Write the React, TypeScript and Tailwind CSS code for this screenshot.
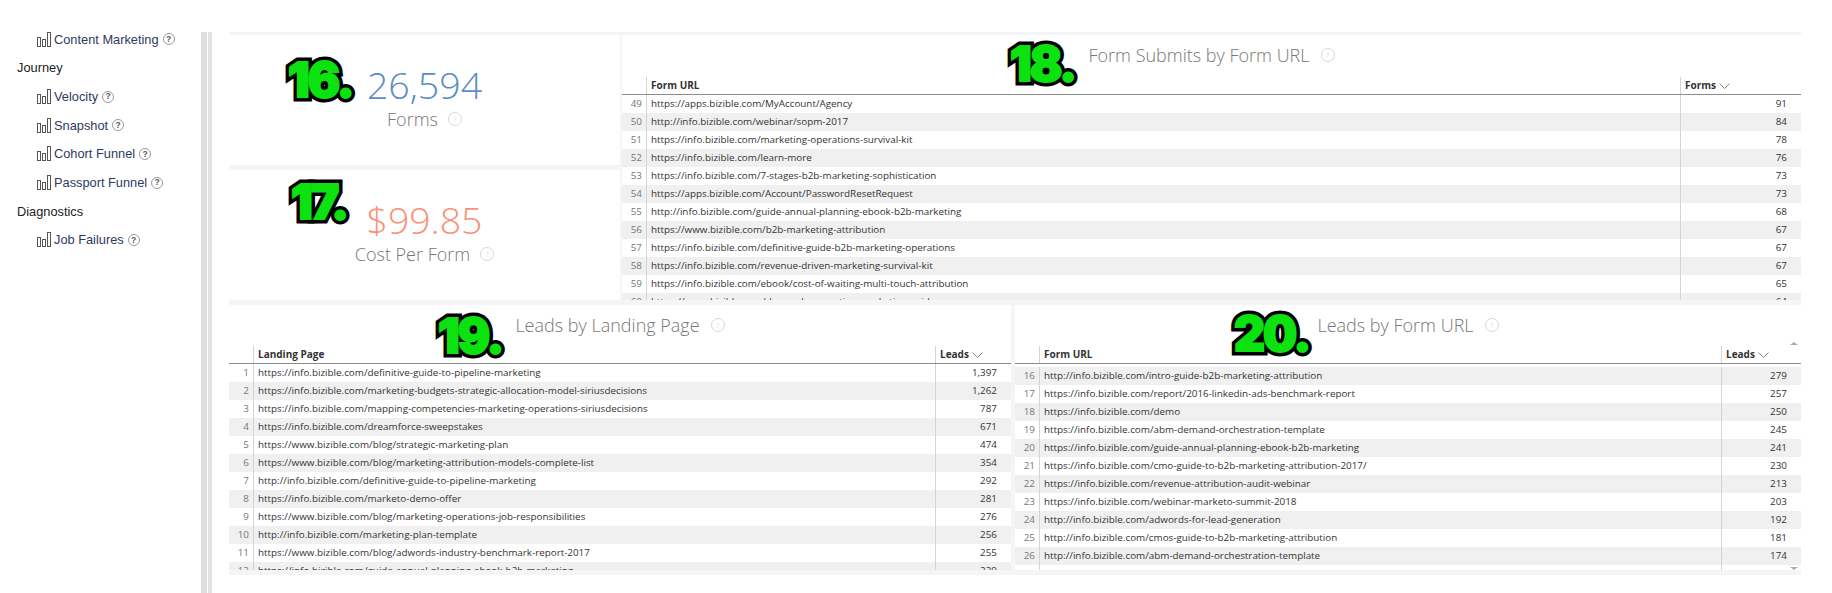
const OS = "font-['Open_Sans',sans-serif]";

function BarsIcon() {
  return (
    <svg width="14" height="15" viewBox="0 0 14 15" fill="none" stroke="#555" strokeWidth="1" className="shrink-0">
      <rect x="0.5" y="5.5" width="3" height="9" />
      <rect x="5.5" y="7.5" width="3" height="7" />
      <rect x="10.5" y="0.5" width="3" height="14" />
    </svg>
  );
}

function SmallHelp() {
  return (
    <span className="ml-[4px] inline-flex h-[12px] w-[12px] items-center justify-center rounded-full border border-[#999] text-[8.5px] font-bold leading-none text-[#555]">?</span>
  );
}

function LightHelp() {
  return (
    <span className={`inline-flex h-[14px] w-[14px] items-center justify-center rounded-full border border-[#d8d8d8] text-[8px] leading-none text-[#ccc] ${OS}`}>?</span>
  );
}

function NavItem({ label }: { label: string }) {
  return (
    <div className="flex h-[28.65px] items-center pl-[37px] text-[12.8px] text-[#2f3a5f]">
      <BarsIcon />
      <span className="ml-[3px]">{label}</span>
      <SmallHelp />
    </div>
  );
}

function NavHeading({ label }: { label: string }) {
  return <div className="flex h-[28.65px] items-center pl-[17px] text-[12.8px] text-[#222]">{label}</div>;
}

function Sidebar() {
  return (
    <aside className="w-[201px] shrink-0 pt-[25px] font-['Liberation_Sans',sans-serif]">
      <NavItem label="Content Marketing" />
      <NavHeading label="Journey" />
      <NavItem label="Velocity" />
      <NavItem label="Snapshot" />
      <NavItem label="Cohort Funnel" />
      <NavItem label="Passport Funnel" />
      <NavHeading label="Diagnostics" />
      <NavItem label="Job Failures" />
    </aside>
  );
}

function Badge({ text, className }: { text: string; className: string }) {
  return (
    <span
      data-t={text}
      className={`absolute z-10 font-['Inter',sans-serif] text-[48px] font-black leading-none tracking-[-2px] text-[#0be20f] [-webkit-text-stroke:9px_#000] [paint-order:stroke_fill] [text-shadow:0_2px_3px_rgba(0,0,0,0.5)] before:absolute before:left-0 before:top-0 before:[-webkit-text-stroke:2px_#0be20f] before:[text-shadow:none] before:content-[attr(data-t)] ${className}`}
    >
      {text}
    </span>
  );
}

function Kpi({ value, label, color }: { value: string; label: string; color: string }) {
  return (
    <div className={`flex h-[130px] flex-col items-center bg-white pt-[25px] ${OS}`}>
      <div className={`text-[37.5px] font-light leading-[50px] ${color}`}>{value}</div>
      <div className="mt-[-3px] flex items-center gap-[10px] text-[18px] font-light leading-[24px] text-[#777]">
        {label}
        <LightHelp />
      </div>
    </div>
  );
}

type Row = [number, string, string];

function DataTable({
  title, col, metric, rows, className, headerH, valueW, bodyPad, scroll,
}: {
  title: string; col: string; metric: string; rows: Row[]; className: string; headerH: string; valueW: string; bodyPad?: string; scroll?: boolean;
}) {
  return (
    <section className={`relative flex min-h-0 min-w-0 flex-col overflow-hidden bg-white ${OS} ${className}`}>
      <div className={`flex flex-col ${headerH}`}>
        <div className="flex flex-1 items-start justify-center pt-[8px]">
          <div className="flex h-[24px] items-center gap-[11px] text-[18px] font-light leading-[24px] text-[#777]">
            {title}
            <LightHelp />
          </div>
        </div>
        <div className="flex h-[18px] shrink-0 border-b-[1.5px] border-[#8c8c8c] text-[10px] font-bold leading-[17px] text-[#333]">
          <div className="w-[25px] shrink-0 border-r border-[#d4d4d4]" />
          <div className="min-w-0 flex-1 pl-[4px]">{col}</div>
          <div className={`flex shrink-0 items-center gap-[3px] border-l border-[#d4d4d4] pl-[4px] ${valueW}`}>
            {metric}
            <svg width="11" height="6" viewBox="0 0 11 6" fill="none" stroke="#666" strokeWidth="0.8"><path d="M0.5 0.5 L5.5 5.5 L10.5 0.5" /></svg>
          </div>
        </div>
      </div>
      <div className={`min-h-0 flex-1 overflow-hidden ${bodyPad ?? ""}`}>
        {rows.map(([n, url, v], i) => {
          const striped = scroll ? i % 2 === 0 : i % 2 === 1;
          return (
            <div key={n} className={`flex h-[18px] text-[9.85px] leading-[16px] text-[#333] ${striped ? "bg-[#f0f0f0]" : "bg-white"}`}>
              <div className="w-[25px] shrink-0 border-r border-[#d4d4d4] pr-[4px] text-right text-[#777]">{n}</div>
              <div className="min-w-0 flex-1 truncate pl-[4px]">{url}</div>
              <div className={`shrink-0 border-l border-[#d4d4d4] pr-[14px] text-right ${valueW}`}>{v}</div>
            </div>
          );
        })}
      </div>
      {scroll && (
        <>
          <span className="absolute right-[3px] top-[37px] h-0 w-0 border-x-[4px] border-b-[3px] border-x-transparent border-b-[#aaa]" />
          <span className="absolute bottom-0 right-[3px] h-0 w-0 border-x-[4px] border-t-[3px] border-x-transparent border-t-[#aaa]" />
        </>
      )}
    </section>
  );
}

const formSubmits: Row[] = [
  [49, "https://apps.bizible.com/MyAccount/Agency", "91"],
  [50, "http://info.bizible.com/webinar/sopm-2017", "84"],
  [51, "https://info.bizible.com/marketing-operations-survival-kit", "78"],
  [52, "https://info.bizible.com/learn-more", "76"],
  [53, "https://info.bizible.com/7-stages-b2b-marketing-sophistication", "73"],
  [54, "https://apps.bizible.com/Account/PasswordResetRequest", "73"],
  [55, "http://info.bizible.com/guide-annual-planning-ebook-b2b-marketing", "68"],
  [56, "https://www.bizible.com/b2b-marketing-attribution", "67"],
  [57, "https://info.bizible.com/definitive-guide-b2b-marketing-operations", "67"],
  [58, "https://info.bizible.com/revenue-driven-marketing-survival-kit", "67"],
  [59, "https://info.bizible.com/ebook/cost-of-waiting-multi-touch-attribution", "65"],
  [60, "https://www.bizible.com/demand-generation-marketing-guide", "64"],
];

const landing: Row[] = [
  [1, "https://info.bizible.com/definitive-guide-to-pipeline-marketing", "1,397"],
  [2, "https://info.bizible.com/marketing-budgets-strategic-allocation-model-siriusdecisions", "1,262"],
  [3, "https://info.bizible.com/mapping-competencies-marketing-operations-siriusdecisions", "787"],
  [4, "https://info.bizible.com/dreamforce-sweepstakes", "671"],
  [5, "https://www.bizible.com/blog/strategic-marketing-plan", "474"],
  [6, "https://www.bizible.com/blog/marketing-attribution-models-complete-list", "354"],
  [7, "http://info.bizible.com/definitive-guide-to-pipeline-marketing", "292"],
  [8, "https://info.bizible.com/marketo-demo-offer", "281"],
  [9, "https://www.bizible.com/blog/marketing-operations-job-responsibilities", "276"],
  [10, "http://info.bizible.com/marketing-plan-template", "256"],
  [11, "https://www.bizible.com/blog/adwords-industry-benchmark-report-2017", "255"],
  [12, "https://info.bizible.com/guide-annual-planning-ebook-b2b-marketing", "239"],
];

const formLeads: Row[] = [
  [16, "http://info.bizible.com/intro-guide-b2b-marketing-attribution", "279"],
  [17, "https://info.bizible.com/report/2016-linkedin-ads-benchmark-report", "257"],
  [18, "https://info.bizible.com/demo", "250"],
  [19, "https://info.bizible.com/abm-demand-orchestration-template", "245"],
  [20, "https://info.bizible.com/guide-annual-planning-ebook-b2b-marketing", "241"],
  [21, "https://info.bizible.com/cmo-guide-to-b2b-marketing-attribution-2017/", "230"],
  [22, "https://info.bizible.com/revenue-attribution-audit-webinar", "213"],
  [23, "https://info.bizible.com/webinar-marketo-summit-2018", "203"],
  [24, "http://info.bizible.com/adwords-for-lead-generation", "192"],
  [25, "http://info.bizible.com/cmos-guide-to-b2b-marketing-attribution", "181"],
  [26, "http://info.bizible.com/abm-demand-orchestration-template", "174"],
  [27, "https://info.bizible.com/report/2016-linkedin-ads-benchmark-report", "170"],
];

export default function App() {
  return (
    <div className="relative flex h-[593px] w-[1832px] overflow-hidden bg-white">
      <Sidebar />
      <div className="mt-[32px] flex shrink-0">
        <div className="w-[6px] bg-[#dedede]" />
        <div className="w-[1px] bg-white" />
        <div className="w-[4px] bg-[#e2e2e2]" />
      </div>
      <main className="ml-[17px] mt-[32px] flex h-[543px] w-[1572px] flex-col gap-[5px] bg-[#f4f5f7] pb-[5px] pt-[3px]">
        <div className="flex h-[265px] shrink-0 gap-[2px]">
          <div className="flex w-[391px] shrink-0 flex-col gap-[5px]">
            <Kpi value="26,594" label="Forms" color="text-[#5b8cc8]" />
            <Kpi value="$99.85" label="Cost Per Form" color="text-[#fb9077]" />
          </div>
          <DataTable className="flex-1" title="Form Submits by Form URL" col="Form URL" metric="Forms" rows={formSubmits} headerH="h-[60px]" valueW="w-[121px]" />
        </div>
        <div className="flex min-h-0 flex-1 gap-[4px]">
          <DataTable className="w-[782px] shrink-0" title="Leads by Landing Page" col="Landing Page" metric="Leads" rows={landing} headerH="h-[59px]" valueW="w-[76px]" />
          <DataTable className="flex-1" title="Leads by Form URL" col="Form URL" metric="Leads" rows={formLeads} headerH="h-[59px]" valueW="w-[80px]" bodyPad="pt-[3px]" scroll />
        </div>
      </main>
      <Badge text="16." className="left-[288px] top-[56px]" />
      <Badge text="17." className="left-[291px] top-[178px]" />
      <Badge text="18." className="left-[1010px] top-[40px]" />
      <Badge text="19." className="left-[438px] top-[312px]" />
      <Badge text="20." className="left-[1234px] top-[310px]" />
    </div>
  );
}
